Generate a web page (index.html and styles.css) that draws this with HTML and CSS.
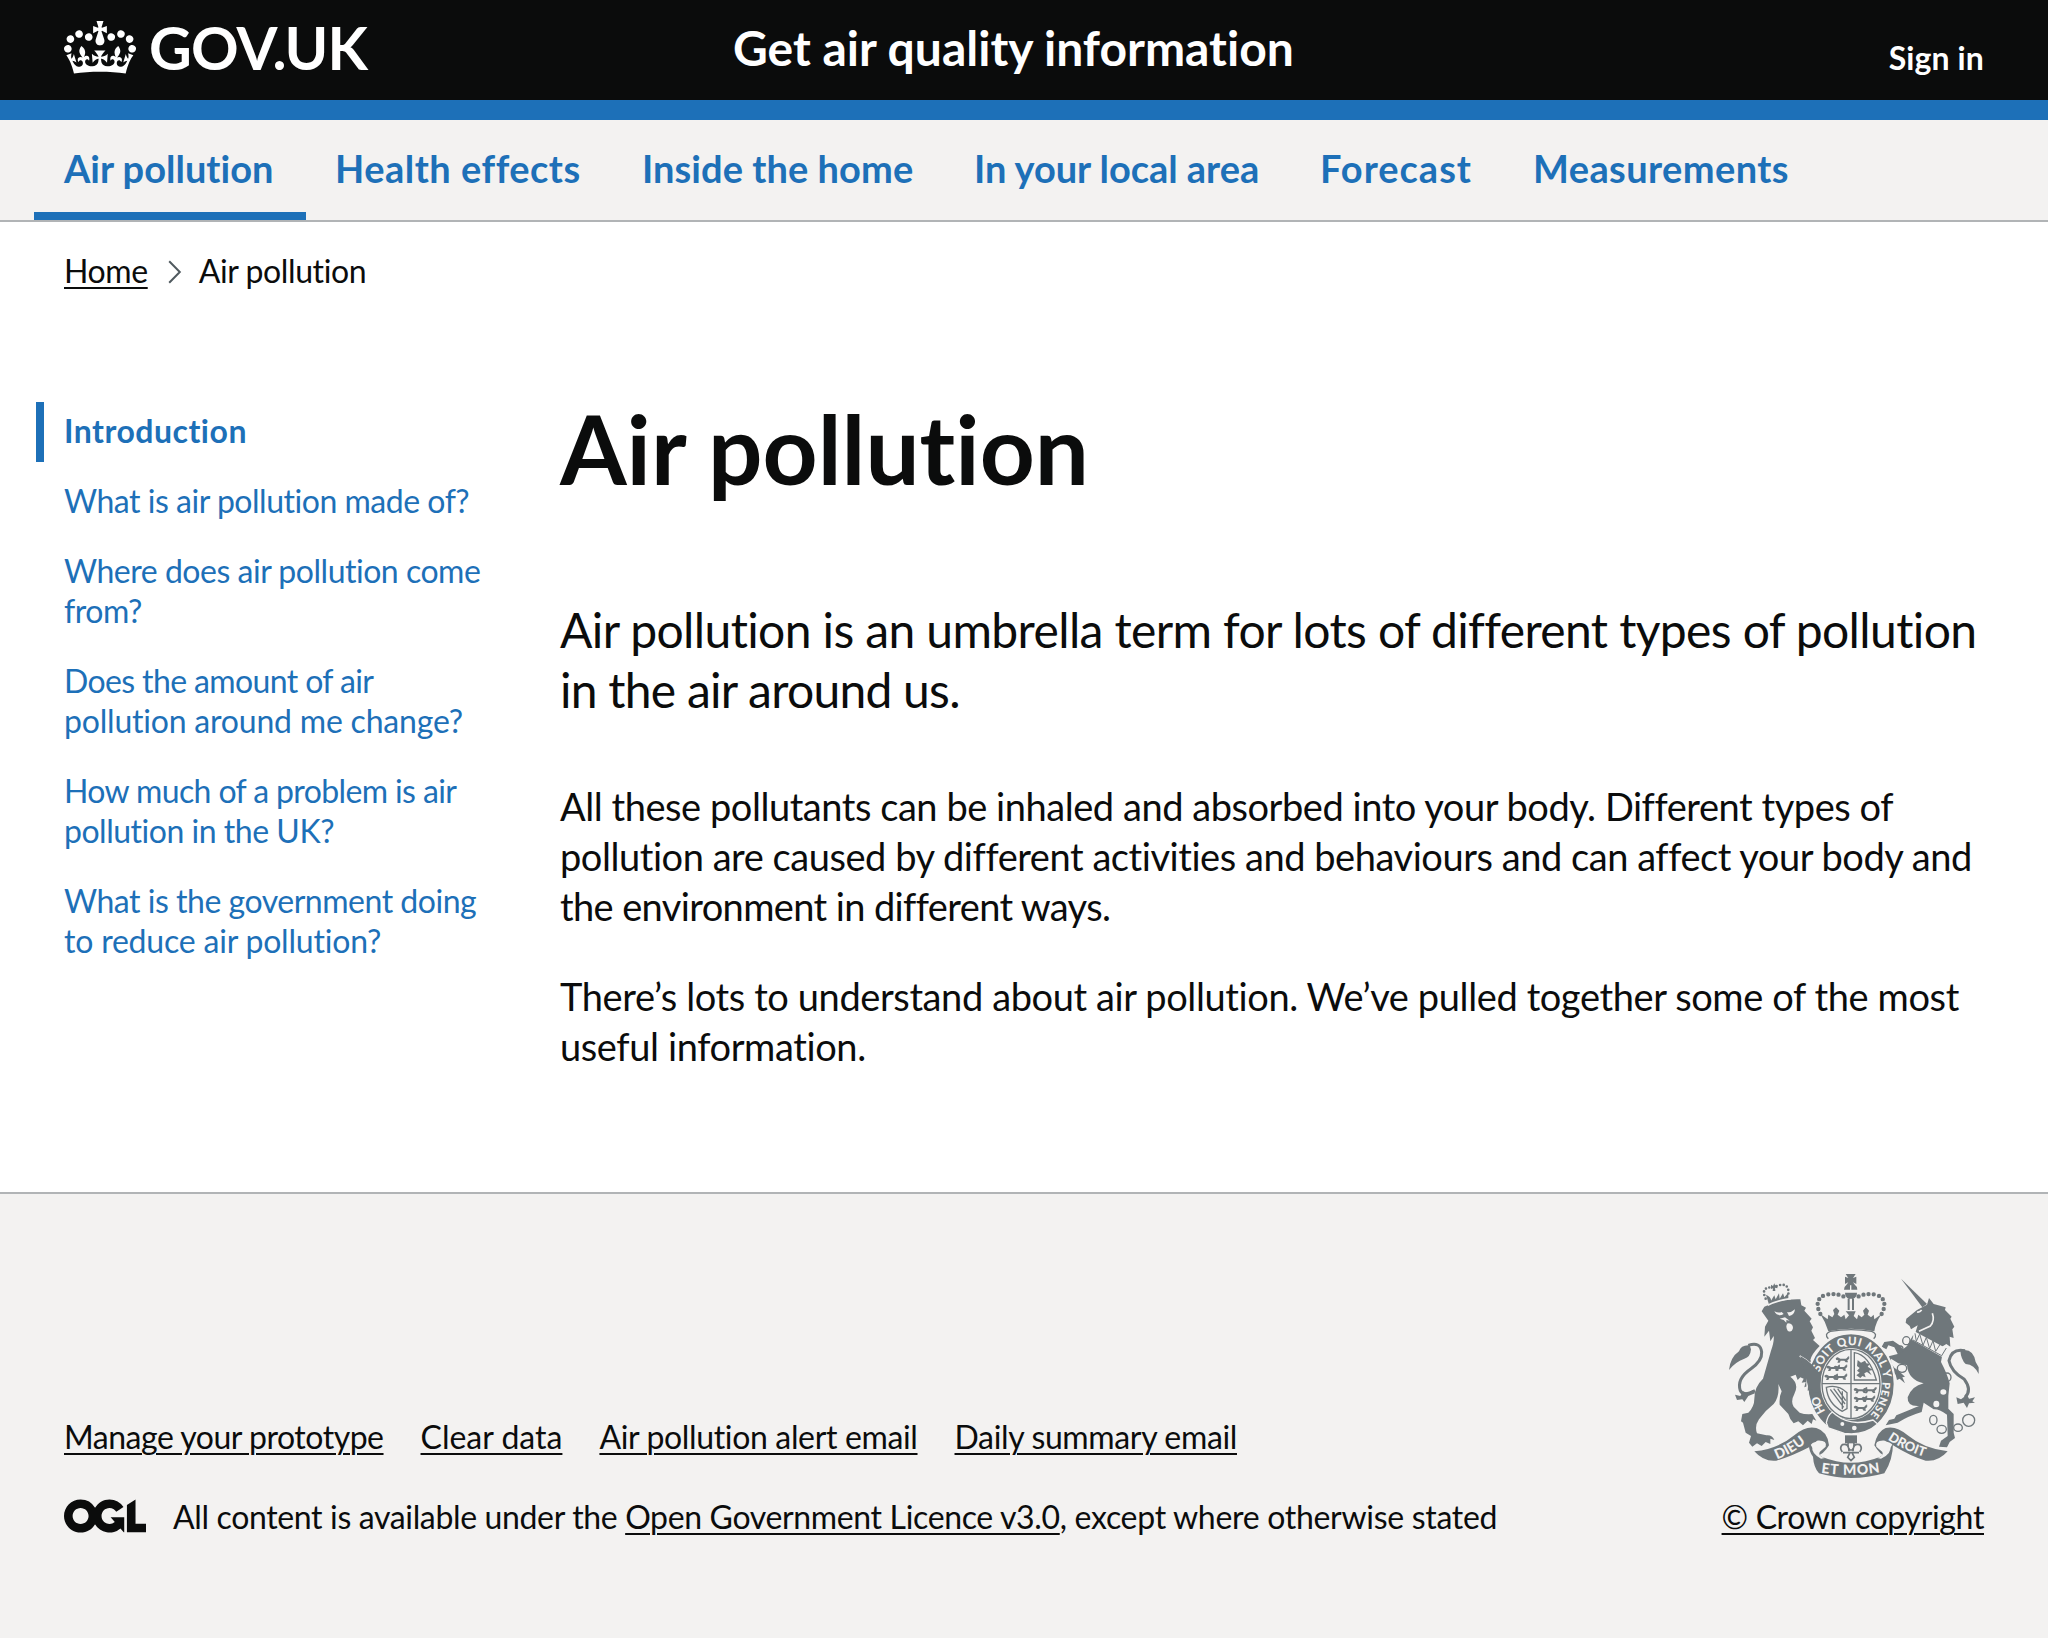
FILE: index.html
```html
<!DOCTYPE html>
<html lang="en">
<head>
<meta charset="utf-8">
<title>Air pollution – Get air quality information – GOV.UK</title>
<link rel="stylesheet" href="styles.css">
</head>
<body>
<header class="header">
  <a class="header-logo" href="#">
    <svg class="crown" viewBox="0 0 132 97" aria-hidden="true"><path fill="currentColor" fill-rule="evenodd" d="M25 30.2c3.5 1.5 7.7-.2 9.1-3.7 1.5-3.6-.2-7.8-3.9-9.2-3.6-1.4-7.6.3-9.1 3.9-1.4 3.5.3 7.5 3.9 9zM9 39.5c3.6 1.5 7.8-.2 9.2-3.7 1.5-3.6-.2-7.8-3.9-9.1-3.6-1.5-7.6.2-9.1 3.8-1.4 3.5.3 7.5 3.8 9zM4.4 57.2c3.5 1.5 7.7-.2 9.1-3.8 1.5-3.6-.2-7.7-3.9-9.1-3.5-1.5-7.6.3-9.1 3.8-1.4 3.5.3 7.6 3.9 9.1zm38.3-21.4c3.5 1.5 7.7-.2 9.1-3.8 1.5-3.6-.2-7.7-3.9-9.1-3.6-1.5-7.6.3-9.1 3.8-1.3 3.6.4 7.7 3.9 9.1zm64.4-5.6c-3.6 1.5-7.8-.2-9.1-3.7-1.5-3.6.2-7.8 3.8-9.2 3.6-1.4 7.7.3 9.2 3.9 1.3 3.5-.4 7.5-3.9 9zm15.9 9.3c-3.6 1.5-7.7-.2-9.1-3.7-1.5-3.6.2-7.8 3.7-9.1 3.6-1.5 7.7.2 9.2 3.8 1.5 3.5-.3 7.5-3.8 9zm4.7 17.7c-3.6 1.5-7.8-.2-9.2-3.8-1.5-3.6.2-7.7 3.9-9.1 3.6-1.5 7.7.3 9.2 3.8 1.3 3.5-.4 7.6-3.9 9.1zM89.3 35.8c-3.6 1.5-7.8-.2-9.2-3.8-1.4-3.6.2-7.7 3.9-9.1 3.6-1.5 7.7.3 9.2 3.8 1.4 3.6-.3 7.7-3.9 9.1zM69.7 17.7l8.9 4.7V9.3l-8.9 2.8c-.2-.3-.5-.6-.9-.9L72.4 0H59.6l3.5 11.2c-.3.3-.6.5-.9.9l-8.8-2.8v13.1l8.8-4.7c.3.3.6.7.9.9l-5 15.4v.1c-.2.8-.4 1.6-.4 2.4 0 4.1 3.1 7.5 7 8.1h.2c.3 0 .7.1 1 .1.4 0 .7 0 1-.1h.2c4-.6 7.1-4.1 7.1-8.1 0-.8-.1-1.7-.4-2.4V34l-5.1-15.4c.4-.2.7-.6 1-.9zM66 92.8c16.9 0 32.8 1.1 47.1 3.2 4-16.9 8.9-26.7 14-33.5l-9.6-3.4c1 4.9 1.1 7.2 0 10.2-1.5-1.4-3-4.3-4.2-8.7L108.6 76c2.8-2 5-3.2 7.5-3.3-4.4 9.4-10 11.9-13.6 11.2-4.3-.8-6.3-4.6-5.6-7.9 1-4.7 5.7-5.9 8-.5 4.3-8.7-3-11.4-7.6-8.8 7.1-7.2 7.9-13.5 2.1-21.1-8 6.1-8.1 12.3-4.5 20.8-4.7-5.4-12.1-2.5-9.5 6.2 3.4-5.2 7.9-2 7.2 3.1-.6 4.3-6.4 7.8-13.5 7.2-10.3-.9-10.9-8-11.2-13.8 2.5-.5 7.1 1.8 11 7.3L80.2 60c-4.1 4.4-8 5.3-12.3 5.4 1.4-4.4 8-11.6 8-11.6H55.5s6.4 7.2 7.9 11.6c-4.2-.1-8-1-12.3-5.4l1.4 16.4c3.9-5.5 8.5-7.7 10.9-7.3-.3 5.8-.9 12.8-11.1 13.8-7.2.6-12.9-2.9-13.5-7.2-.7-5 3.8-8.3 7.1-3.1 2.7-8.7-4.6-11.6-9.4-6.2 3.7-8.5 3.6-14.7-4.6-20.8-5.8 7.6-5 13.9 2.2 21.1-4.7-2.6-11.9.1-7.7 8.8 2.3-5.5 7.1-4.2 8.1.5.7 3.3-1.3 7.1-5.7 7.9-3.5.7-9-1.8-13.5-11.2 2.5.1 4.7 1.3 7.5 3.3l-4.7-15.4c-1.2 4.4-2.7 7.2-4.3 8.7-1.1-3-.9-5.3 0-10.2l-9.5 3.4c5 6.9 9.9 16.7 14 33.5 14.8-2.1 30.8-3.2 47.7-3.2z"/></svg>
    <span class="logotype">GOV.UK</span>
  </a>
  <a class="header-service" href="#">Get air quality information</a>
  <a class="header-signin" href="#">Sign in</a>
</header>

<nav class="nav">
  <a class="nav-link nav-link--current" href="#">Air pollution</a>
  <a class="nav-link nav-link--health" href="#">Health effects</a>
  <a class="nav-link nav-link--home" href="#">Inside the home</a>
  <a class="nav-link nav-link--area" href="#">In your local area</a>
  <a class="nav-link nav-link--forecast" href="#">Forecast</a>
  <a class="nav-link nav-link--measure" href="#">Measurements</a>
</nav>

<div class="breadcrumbs">
  <a class="link" href="#">Home</a>
  <svg class="chevron" viewBox="0 0 14 24" aria-hidden="true"><path d="M1.2 1.2 11.8 12 1.2 22.8"/></svg>
  <span>Air pollution</span>
</div>

<div class="layout">
  <nav class="subnav">
    <a class="subnav-link subnav-link--current" href="#">Introduction</a>
    <a class="subnav-link" href="#">What is air pollution made of?</a>
    <a class="subnav-link" href="#">Where does air pollution come<br>from?</a>
    <a class="subnav-link" href="#"><span class="tight">Does the amount of air</span><br><span class="loose">pollution around me change?</span></a>
    <a class="subnav-link" href="#"><span class="tight">How much of a problem is air</span><br>pollution in the UK?</a>
    <a class="subnav-link" href="#">What is the government doing<br><span class="loose">to reduce air pollution?</span></a>
  </nav>
  <main class="content">
    <h1 class="title">Air pollution</h1>
    <p class="lead">Air pollution is an umbrella term for lots of different types of pollution<br><span class="tight-lead">in the air around us.</span></p>
    <p class="body">All these pollutants can be inhaled and absorbed into your body. Different types of<br>pollution are caused by different activities and behaviours and can affect your body and<br><span class="tight">the environment in different ways.</span></p>
    <p class="body body--last">There’s lots to understand about air pollution. We’ve pulled together some of the most<br>useful information.</p>
  </main>
</div>

<footer class="footer">
  <div class="footer-meta">
    <ul class="footer-links">
      <li><a class="link link--manage" href="#">Manage your prototype</a></li>
      <li><a class="link link--clear" href="#">Clear data</a></li>
      <li><a class="link" href="#">Air pollution alert email</a></li>
      <li><a class="link" href="#">Daily summary email</a></li>
    </ul>
    <div class="licence">
      <svg class="ogl" viewBox="0 0 483.2 195.7" aria-hidden="true"><path fill="currentColor" d="M421.5 142.8V.1l-50.7 32.3v161.1h112.4v-50.7zm-122.3-9.6A47.12 47.12 0 0 1 221 97.8c0-26 21.1-47.1 47.1-47.1 16.7 0 31.4 8.7 39.7 21.8l42.7-27.2A97.63 97.63 0 0 0 268.1 0c-36.5 0-68.3 20.1-85.1 49.7A98 98 0 0 0 97.8 0C43.9 0 0 43.9 0 97.8s43.9 97.8 97.8 97.8c36.5 0 68.3-20.1 85.1-49.7a97.76 97.76 0 0 0 149.6 25.4l19.4 22.2h3v-87.8h-80l24.3 27.5zM97.8 145c-26 0-47.1-21.1-47.1-47.1s21.1-47.1 47.1-47.1 47.1 21.1 47.1 47.1S123.8 145 97.8 145"/></svg>
      <span class="licence-text">All content is available under the <a class="link" href="#">Open Government Licence v3.0</a><span class="licence-end">, except where otherwise stated</span></span>
    </div>
  </div>
  <div class="copyright">
    <svg class="arms" viewBox="51 42 753 612" aria-hidden="true">
      <defs>
        <path id="garter-arc" d="M347 458A99 121 0 1 1 493 458"/>
        <path id="garter-right" d="M514 366Q514 428 470 474"/>
        <path id="scroll-left" d="M198 598Q252 578 304 532"/>
        <path id="scroll-mid" d="M330 638Q420 652 512 636"/>
        <path id="scroll-right" d="M530 538Q586 576 658 596"/>
        <g id="passant">
          <path d="M0 6q4-6 9-3l5 3h16q5-1 6-6l4 3q-1 6-5 8l2 6h-7l-4-5H15l-3 6H5l3-7-6-1z"/>
          <path class="thin" d="M34 7q8 1 5-8"/>
        </g>
      </defs>

      <!-- lion -->
      <g class="ink">
        <path d="M160 140Q206 116 268 118L271 136 285 143 280 152 302 176 296 184 306 202 301 212 312 234 306 240 326 258Q302 282 298 300L330 352 326 398 308 398 304 388 290 392 291 378 280 382 284 366 272 368 278 356 268 352 260 360 254 344 238 350Q266 372 250 402Q238 424 248 440L266 458Q282 464 304 462L316 482 306 478 302 492 290 482 276 496 262 484 248 490Q236 478 232 462L206 434Q204 410 212 394L202 372Q206 410 188 432Q162 452 144 478 130 498 138 520L166 526Q184 524 190 540L178 536 178 552 164 546 152 558 138 550 124 560 114 548 120 528 104 518 96 488 90 484 94 462 112 458Q130 440 130 416 130 380 156 356L180 272Q190 244 188 228L178 244 174 212 160 230 162 200 172 182 152 154Z"/>
        <path d="M54 330Q58 292 84 274 90 254 116 256L120 268Q118 292 100 296 72 306 54 330Z"/>
        <path class="tail" d="M112 256Q148 244 152 276 154 302 120 326 76 356 88 392 96 410 132 392"/>
        <path d="M72 404l16 4 8-14 14 6 16-10 6 10-20 8-12 18-6-8-16 2z"/>
        <path d="M175 137 165 104Q182 112 180 122L190 106 194 118 204 100 206 116 216 100 220 112 232 98 232 116Q202 120 175 137Z"/>
        <path d="M180 74l6 4 4-8 3 8 7-3-1 10-7-2 1 10h-8l1-8-6 2z"/>
      </g>
      <g class="paper">
        <path d="M190 154q12 6 22 2l6 6q-18 10-28-8zM228 156q10 4 24-8-2 18-18 20zM206 176l16-4 14 10-10-2 0 8-8-8zM230 190q16 0 16 14-4 16-16 8-8-14 0-22z"/>
      </g>
      <path class="cut" d="M170 136Q200 120 240 116M266 288Q300 306 322 340"/>
      <path class="dots" d="M164 116Q148 82 182 82M196 78Q236 64 232 104"/>

      <!-- unicorn -->
      <g class="ink">
        <path d="M570 56 648 132 634 142Z"/>
        <path d="M586 176 618 150 648 134 654 114 668 132 704 142 702 150 722 170 718 176 730 200 724 208 728 234 716 230 718 260 706 252 690 262 612 222 620 196 600 208 596 198 584 188Z"/>
        <path d="M606 226 694 284 690 306Q708 340 716 370L712 408 712 446 728 462 728 518 732 534 716 546 708 562 684 560 690 542 710 528 708 464Q682 446 668 448L638 428 632 456Q592 468 560 488L524 496 534 480 550 476 556 466Q600 448 624 438 588 440 590 412 602 378 638 370 592 360 588 316L562 310 540 296Q538 318 560 330L582 350 574 352 582 370 566 356 558 360 554 344 530 320Q520 296 536 288L560 282 550 262 532 256 526 268 512 260 520 246 546 242 566 256 576 268 588 258Z"/>
        <path d="M748 272Q786 262 794 306L803 322 803 342Q790 314 764 312 750 298 748 272Z"/>
        <path class="tail" d="M762 272Q722 264 714 302 720 334 760 358 784 390 762 412"/>
        <path d="M768 404l6 12 18-4-8 12 8 4-18 2-6 14-10-16-18 4-4-20 14 6z"/>
      </g>
      <path class="cut" d="M632 150q-6 8 -14 6M664 160q8 22 -6 38l-34 16"/>
      <path class="paper" d="M610 214L708 266 692 290 604 240Z"/>
      <path class="collar" d="M606 240L692 287L706 264M612 220l4 24 10-22 10 34 10-24 10 34 10-24 8 32 14-22"/>
      <g class="ring">
        <ellipse cx="586" cy="242" rx="11" ry="12"/><ellipse cx="568" cy="267" rx="8" ry="9"/><ellipse cx="573" cy="325" rx="14" ry="12"/><ellipse cx="708" cy="352" rx="12" ry="13"/><ellipse cx="667" cy="480" rx="11" ry="14"/><ellipse cx="692" cy="508" rx="14" ry="12"/><ellipse cx="741" cy="503" rx="13" ry="11"/><circle cx="773" cy="481" r="18"/>
      </g>
      <g class="paper"><ellipse cx="676" cy="432" rx="9" ry="10"/><ellipse cx="697" cy="396" rx="9" ry="8"/></g>

      <!-- garter and shield -->
      <ellipse class="garter" cx="420" cy="372" rx="131" ry="152"/>
      <ellipse class="paper" cx="420" cy="372" rx="92" ry="108"/>
      <ellipse class="shield" cx="420" cy="372" rx="87" ry="104"/>
      <path class="line" d="M420 268V476M333 371H507"/>
      <g class="ink">
        <use href="#passant" x="374" y="290"/><use href="#passant" x="368" y="315"/><use href="#passant" x="368" y="342"/>
        <use href="#passant" x="346" y="315"/><use href="#passant" x="340" y="342"/>
        <use href="#passant" x="428" y="382"/><use href="#passant" x="428" y="408"/><use href="#passant" x="428" y="435"/>
        <use href="#passant" x="452" y="408"/><use href="#passant" x="456" y="382"/>
        <path d="M440 300l10 8 12-6 4 8 10 2-6 8 16 10-12 2 8 14-14-10-8 4 4 12-10-4-6 6-12-8 10-8-8-6 8-8-8-6z"/>
      </g>
      <path class="line" d="M430 278Q474 284 496 360H430Z"/>
      <path class="line" d="M346 382Q380 372 408 398V446L394 454Q350 430 346 382ZM358 388l40 54M368 386l34 46M380 386l24 36M394 394v54"/>
      <text class="motto"><textPath href="#garter-arc" startOffset="6" textLength="50">HO</textPath></text>
      <text class="motto"><textPath href="#garter-arc" startOffset="126" textLength="286">SOIT QUI MAL Y</textPath></text>
      <text class="motto motto--small"><textPath href="#garter-right" textLength="108">PENSE</textPath></text>
      <path class="ink paper-edge" d="M346 488Q350 466 364 456L376 466Q420 500 486 480L500 492Q460 528 400 520L352 504Z"/>
      <circle class="paper" cx="394" cy="492" r="6"/><circle class="paper" cx="430" cy="504" r="7"/>
      <path class="ink" d="M268 288Q310 310 330 352L326 398 308 398 304 388 290 392 291 378Z"/>

      <!-- crown -->
      <path class="paper" d="M340 150H500V206L496 240Q420 204 344 240Z"/>
      <path class="shield" d="M352 236Q338 222 358 214 420 204 482 214 502 222 488 236"/>
      <path class="ink" d="M328 162 350 178 352 164 364 172 370 162 366 150 375 142 385 152 380 164 390 172 400 164 404 178 414 166 404 154H434L428 168 438 178 442 164 452 172 460 164 456 152 465 142 474 152 470 164 480 172 488 164 490 178 512 162Q494 186 490 214Q420 198 352 214Q344 186 328 162Z"/>
      <path class="dots dots--large" d="M328 162Q306 118 344 104 380 98 402 112M512 162Q534 118 496 104 460 98 438 112"/>
      <path class="ink" d="M404 42h30l-8 12 10-4v22l-10-5 6 8q8 5 7 14h-40q0-9 7-14l6-8-10 5V50l10 4zM402 98h36q0 14-12 18h-12q-12-4-12-18zM410 116h6v34h-6zM423 116h6v34h-6z"/>
      <path class="cutthin" d="M419 76v14"/>

      <!-- scrolls -->
      <path class="ink" d="M130 574Q202 566 250 526 284 496 316 504 350 514 354 556 338 584 316 588Q310 580 318 570 340 556 322 544 302 546 294 562 240 590 196 602 158 606 130 574Z"/>
      <path class="ink" d="M710 574Q638 566 590 526 556 496 524 504 498 514 490 556 506 584 524 588Q530 580 522 570 500 556 518 544 538 546 546 556 600 590 644 602 682 606 710 574Z"/>
      <path class="ink" d="M294 546Q310 576 332 590 420 626 508 590 534 576 546 550 546 600 520 640 420 668 324 640 308 622 306 590 292 572 294 546Z"/>
      <path class="paper" d="M318 542Q350 540 344 560L326 576Q320 588 342 594L330 596Q300 580 304 558ZM522 542Q490 540 496 560L514 576Q520 588 498 594L510 596Q544 580 538 554Z"/>
      <text class="motto motto--scroll"><textPath href="#scroll-left">DIEU</textPath></text>
      <text class="motto motto--scroll"><textPath href="#scroll-mid" textLength="178">ET MON</textPath></text>
      <text class="motto motto--scroll motto--droit"><textPath href="#scroll-right">DROIT</textPath></text>
      <path class="ink" d="M402 526h36v24h-36z"/>
      <path class="fleur" d="M420 532q-16 18-4 38h8q12-20-4-38zM414 574q0-26-20-20-10 10 0 22M426 574q0-26 20-20 10 10 0 22M396 578h48M416 580l-6 12 10 10 10-10-6-12"/>
    </svg>
    <a class="link" href="#">© Crown copyright</a>
  </div>
</footer>
</body>
</html>
```
FILE: styles.css
```css
* { box-sizing: border-box; }

body {
  margin: 0;
  min-height: 1638px;
  display: flex;
  flex-direction: column;
  background: #fff;
  color: #0b0c0c;
  font-family: Lato, "Liberation Sans", sans-serif;
  font-size: 32px;
  font-variant-ligatures: none;
  line-height: 40px;
  letter-spacing: -0.35px;
}

a { color: inherit; text-decoration: none; }

.link {
  text-decoration: underline;
  text-decoration-thickness: 2px;
  text-underline-offset: 4px;
}

/* Header */
.header {
  display: grid;
  grid-template-columns: 670px 1fr auto;
  height: 120px;
  padding: 0 64px;
  border-bottom: 20px solid #1d70b8;
  background: #0b0c0c;
  color: #fff;
  font-weight: 700;
}
.header-logo { display: flex; align-items: flex-start; gap: 13px; }
.crown { width: 72px; height: 53px; margin-top: 21px; }
.logotype { margin-top: 18px; font-size: 59px; line-height: 60px; letter-spacing: -0.85px; }
.header-service { margin: 18px 0 0 -1px; font-size: 48px; line-height: 60px; letter-spacing: 0; }
.header-signin { margin-top: 38px; letter-spacing: 0.1px; }

/* Primary navigation */
.nav {
  display: flex;
  height: 102px;
  padding-left: 34px;
  border-bottom: 2px solid #b1b4b6;
  background: #f3f2f1;
  color: #1d70b8;
  font-size: 38px;
  font-weight: 700;
  line-height: 50px;
}
.nav-link { padding: 23px 30px 0; letter-spacing: 0; white-space: nowrap; }
.nav-link--current { width: 272px; border-bottom: 8px solid #1d70b8; }
.nav-link--health { width: 306px; padding-left: 29px; letter-spacing: 0.5px; }
.nav-link--home { width: 332px; padding-left: 30px; letter-spacing: 0.06px; }
.nav-link--area { width: 346px; padding-left: 30px; letter-spacing: -0.05px; }
.nav-link--forecast { width: 213px; padding-left: 30px; letter-spacing: 1px; }
.nav-link--measure { padding-left: 30px; letter-spacing: 0.4px; }

/* Breadcrumbs */
.breadcrumbs { display: flex; height: 40px; margin: 29px 64px 0; letter-spacing: -0.4px; }
.chevron { width: 14px; height: 24px; margin: 9px 17px 0 20px; fill: none; stroke: #505a5f; stroke-width: 2; }

/* Page body */
.layout {
  display: grid;
  grid-template-columns: 524px 1fr;
  flex: 1;
  padding: 107px 64px 0 36px;
}
.subnav { display: flex; flex-direction: column; gap: 30px; padding-top: 4px; color: #1d70b8; letter-spacing: -0.48px; }
.subnav-link { padding-left: 28px; }
.subnav-link--current {
  height: 60px;
  margin-bottom: -11px;
  padding: 9px 0 11px 20px;
  border-left: 8px solid #1d70b8;
  font-weight: 700;
  letter-spacing: 0.5px;
}
.tight { letter-spacing: -0.62px; }
.loose { letter-spacing: -0.2px; }
.tight-lead { letter-spacing: -0.75px; }
.title { margin: 0 0 102px; font-size: 96px; line-height: 100px; letter-spacing: 0; }
.lead { margin: 0 0 61px; font-size: 48px; line-height: 60px; letter-spacing: -0.62px; white-space: nowrap; }
.body { margin: 0 0 40px; font-size: 38px; line-height: 50px; letter-spacing: -0.45px; white-space: nowrap; }
.body--last { letter-spacing: -0.39px; }

/* Footer */
.footer {
  display: flex;
  justify-content: space-between;
  align-items: flex-end;
  height: 446px;
  padding: 0 64px 101px;
  border-top: 2px solid #b1b4b6;
  background: #f3f2f1;
}
.footer-links { display: flex; gap: 37px; margin: 0 0 40px; padding: 0; list-style: none; }
.link--manage { letter-spacing: -0.48px; }
.link--clear { letter-spacing: 0; }
.licence { display: flex; align-items: flex-start; }
.licence-end { letter-spacing: -0.3px; }
.ogl { width: 82px; height: 34px; margin: 2px 27px 0 0; }
.copyright { display: flex; flex-direction: column; align-items: flex-end; }

/* Royal coat of arms */
.arms { width: 251px; height: 204px; margin: 0 5px 19px 0; }
.ink { fill: #6f777b; }
.paper { fill: #f3f2f1; }
.paper-edge { stroke: #f3f2f1; stroke-width: 4; }
.thin { fill: none; stroke: #6f777b; stroke-width: 3; }
.line, .shield { fill: none; stroke: #6f777b; stroke-width: 4; }
.garter { fill: #6f777b; stroke: #f3f2f1; stroke-width: 6; }
.tail { fill: none; stroke: #6f777b; stroke-width: 9; }
.cut { fill: none; stroke: #f3f2f1; stroke-width: 5; }
.cutthin { fill: none; stroke: #f3f2f1; stroke-width: 4; }
.collar { fill: none; stroke: #6f777b; stroke-width: 3; }
.ring { fill: none; stroke: #6f777b; stroke-width: 4; }
.dots { fill: none; stroke: #6f777b; stroke-width: 8; stroke-linecap: round; stroke-dasharray: 0 11; }
.dots--large { stroke-width: 13; stroke-dasharray: 0 15.5; }
.fleur { fill: none; stroke: #6f777b; stroke-width: 5; }
.motto { fill: #f3f2f1; font-size: 35px; font-weight: 900; letter-spacing: 0; }
.motto--small { font-size: 32px; }
.motto--scroll { font-size: 42px; }
.motto--droit { font-size: 39px; }
```
